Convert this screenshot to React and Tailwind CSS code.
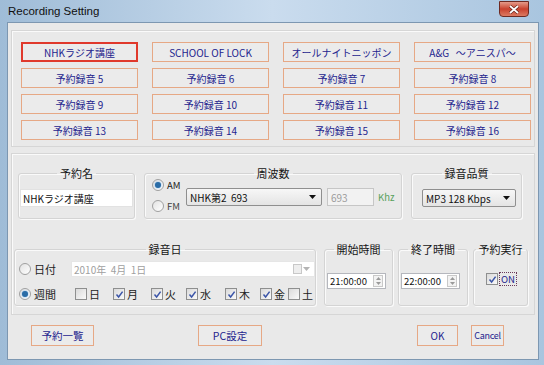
import React from 'react';

const SLOTS = [
  'NHKラジオ講座', 'SCHOOL OF LOCK', 'オールナイトニッポン', 'A&G   ～アニスパ～',
  '予約録音 5', '予約録音 6', '予約録音 7', '予約録音 8',
  '予約録音 9', '予約録音 10', '予約録音 11', '予約録音 12',
  '予約録音 13', '予約録音 14', '予約録音 15', '予約録音 16',
];

const DAYS = [
  { d: '日', on: false, w: 'w-[38px]' },
  { d: '月', on: true, w: 'w-[38px]' },
  { d: '火', on: true, w: 'w-[35px]' },
  { d: '水', on: true, w: 'w-[39px]' },
  { d: '木', on: true, w: 'w-[35px]' },
  { d: '金', on: true, w: 'w-[28px]' },
  { d: '土', on: false, w: 'w-[20px]' },
];

const SlotButton = ({ label, active = false, className = '' }) => (
  <div
    className={`
      flex items-center justify-center bg-[#ebebeb] text-[#24248e] whitespace-pre
      ${active ? 'border-2 border-[#e0392c]' : 'border border-[#e6a885]'}
      ${className}
    `}
  >
    {label}
  </div>
);

const Radio = ({ checked }) => (
  <span className="w-[12px] h-[12px] shrink-0 rounded-full border border-[#a0a0a0] bg-gradient-to-br from-[#e2e2e2] to-white flex items-center justify-center">
    {checked && <span className="w-[6px] h-[6px] rounded-full bg-[#2a6ca6] shadow-[0_0_2px_#6fb0ea]" />}
  </span>
);

const Check = ({ checked }) => (
  <span className="w-[12px] h-[12px] shrink-0 border border-[#8e8f8f] bg-gradient-to-br from-[#dadada] to-[#fafafa] flex items-center justify-center">
    {checked && (
      <svg width="9" height="9" viewBox="0 0 9 9">
        <path d="M1.5 4.6 L3.6 7 L7.6 1.6" stroke="#3b55a8" strokeWidth="1.5" fill="none" />
      </svg>
    )}
  </span>
);

const Arrow = ({ color = '#111' }) => (
  <svg width="7" height="4" viewBox="0 0 7 4">
    <path d="M0 0 H7 L3.5 4 Z" fill={color} />
  </svg>
);

const Group = ({ title, className = '', children }) => (
  <fieldset className={`border border-[#d4d4d4] rounded-[3px] shadow-[inset_1px_1px_0_#fafafa,1px_1px_0_#fafafa] ${className}`}>
    <legend className="mx-auto px-[3px] text-[11px] leading-[14px] text-[#151515]">{title}</legend>
    {children}
  </fieldset>
);

const Combo = ({ value, className = '' }) => (
  <div className={`h-[18px] flex items-center justify-between pl-[3px] pr-[5px] rounded-[2px] border border-[#8f8f8f] bg-gradient-to-b from-[#f7f7f7] to-[#e4e4e4] text-[10px] text-[#111] ${className}`}>
    <span className="whitespace-pre">{value}</span>
    <Arrow />
  </div>
);

const Spin = ({ value }) => (
  <div className="h-[16px] w-[59px] flex items-center justify-between pl-[2px] pr-[2px] border border-[#b5b7bd] bg-white text-[9.5px] text-[#111]">
    <span>{value}</span>
    <span className="w-[10px] h-[12px] border border-[#c9c9c9] flex flex-col items-center justify-around bg-[#f3f3f3]">
      <svg width="5" height="3" viewBox="0 0 5 3"><path d="M0 3 L2.5 0 L5 3 Z" fill="#9a9a9a" /></svg>
      <svg width="5" height="3" viewBox="0 0 5 3"><path d="M0 0 H5 L2.5 3 Z" fill="#9a9a9a" /></svg>
    </span>
  </div>
);

export default function App() {
  return (
    <div className="w-[544px] h-[365px] flex flex-col bg-gradient-to-r from-[#9fbcd7] via-[#cadcee] to-[#a9c5df] font-['Noto_Sans_CJK_JP','Liberation_Sans',sans-serif] overflow-hidden">
      {/* title bar */}
      <div className="h-[22px] flex items-start shrink-0">
        <span className="pl-[8px] pt-[4px] text-[11.5px] leading-[14px] text-[#101010] font-['Liberation_Sans',sans-serif]">
          Recording Setting
        </span>
        <div className="ml-auto mr-[15px] mt-[1px] w-[30px] h-[16px] rounded-b-[4px] border border-[#6e2a22] bg-gradient-to-b from-[#e39a8a] via-[#c8402d] to-[#dc7a62] flex items-center justify-center">
          <svg width="10" height="9" viewBox="0 0 10 9">
            <path d="M1 1 L9 8 M9 1 L1 8" stroke="#5a1a12" strokeWidth="3" />
            <path d="M1 1 L9 8 M9 1 L1 8" stroke="#fff" strokeWidth="1.8" />
          </svg>
        </div>
      </div>

      {/* client area */}
      <div className="ml-[7px] w-[532px] h-[338px] border border-[#7d97b1] bg-[#e9e9e9] flex flex-col">
        {/* slot buttons */}
        <div className="mt-[7px] ml-[3px] w-[524px] h-[117px] border border-[#d6d6d6] shadow-[inset_1px_1px_0_#fafafa] pt-[11px] pl-[9px]">
          <div className="grid grid-cols-[117px_117px_117px_117px] gap-x-[14px] gap-y-[6px]">
            {SLOTS.map((s, i) => (
              <SlotButton key={s} label={s} active={i === 0} className="h-[20px] text-[10px]" />
            ))}
          </div>
        </div>

        {/* settings */}
        <div className="mt-[6px] ml-[3px] w-[524px] h-[162px] border border-[#d6d6d6] shadow-[inset_1px_1px_0_#fafafa] pt-[12px]">
          <div className="flex h-[53px] ml-[6px] gap-[9px]">
            <Group title="予約名" className="w-[117px] h-[53px]">
              <div className="mt-[9px] mx-[1px] h-[18px] border border-[#e2e2e2] bg-white flex items-center pl-[2px] text-[10px] text-[#111]">
                NHKラジオ講座
              </div>
            </Group>
            <Group title="周波数" className="w-[258px] h-[53px]">
              <div className="flex items-start pl-[7px]">
                <div className="flex flex-col gap-[7px] mt-[-2px] w-[34px]">
                  <label className="flex items-center gap-[3px] h-[14px] text-[9.5px] text-[#222]">
                    <Radio checked /> AM
                  </label>
                  <label className="flex items-center gap-[3px] h-[14px] text-[9.5px] text-[#444]">
                    <Radio /> FM
                  </label>
                </div>
                <Combo value="NHK第2  693" className="w-[136px] mt-[8px]" />
                <div className="ml-[5px] mt-[8px] w-[47px] h-[18px] border border-[#c6c6c6] bg-[#f2f2f2] flex items-center pl-[3px] text-[10px] text-[#9c9c9c]">
                  693
                </div>
                <span className="ml-[4px] mt-[10px] text-[9.5px] leading-[14px] text-[#55a05a]">Khz</span>
              </div>
            </Group>
            <Group title="録音品質" className="w-[111px] h-[53px]">
              <Combo value="MP3 128 Kbps" className="w-[94px] ml-[10px] mt-[9px]" />
            </Group>
          </div>

          <div className="flex h-[64px] mt-[23px] ml-[2px]">
            <Group title="録音日" className="w-[301px] h-[64px]">
              <div className="flex items-center h-[16px] mt-[5px] pl-[4px]">
                <Radio />
                <span className="ml-[3px] w-[37px] text-[11px] text-[#222]">日付</span>
                <div className="w-[244px] h-[16px] bg-white border border-[#e6e6e6] flex items-center justify-between pl-[2px] pr-[4px] text-[10px] text-[#a0a0a0]">
                  <span className="whitespace-pre">2010年  4月  1日</span>
                  <span className="flex items-center gap-[1px]">
                    <span className="w-[9px] h-[10px] border border-[#c8c8c8] bg-[#eeeeee]" />
                    <Arrow color="#b4b4b4" />
                  </span>
                </div>
              </div>
              <div className="flex items-center h-[16px] mt-[9px] pl-[4px]">
                <Radio checked />
                <span className="ml-[3px] w-[41px] text-[11px] text-[#222]">週間</span>
                {DAYS.map(({ d, on, w }) => (
                  <label key={d} className={`flex items-center gap-[2px] ${w} text-[11px] text-[#222]`}>
                    <Check checked={on} />
                    {d}
                  </label>
                ))}
              </div>
            </Group>
            <Group title="開始時間" className="ml-[8px] w-[69px] h-[64px]">
              <div className="mt-[17px] ml-[2px]"><Spin value="21:00:00" /></div>
            </Group>
            <Group title="終了時間" className="ml-[5px] w-[70px] h-[64px]">
              <div className="mt-[17px] ml-[2px]"><Spin value="22:00:00" /></div>
            </Group>
            <Group title="予約実行" className="ml-[5px] w-[55px] h-[64px]">
              <div className="mt-[16px] ml-[12px] flex items-center gap-[1px]">
                <Check checked />
                <span className="px-[1px] border border-dotted border-[#6a3a5a] text-[9.5px] leading-[12px] text-[#25258c]">ON</span>
              </div>
            </Group>
          </div>
        </div>

        {/* footer buttons */}
        <div className="flex mt-[10px]">
          <SlotButton label="予約一覧" className="ml-[23px] w-[63px] h-[21px] text-[10.5px]" />
          <SlotButton label="PC設定" className="ml-[104px] w-[64px] h-[21px] text-[10.5px]" />
          <SlotButton label="OK" className="ml-[155px] w-[41px] h-[21px] text-[10px]" />
          <SlotButton label="Cancel" className="ml-[13px] w-[33px] h-[21px] text-[9px] tracking-[-0.3px]" />
        </div>
      </div>
    </div>
  );
}
